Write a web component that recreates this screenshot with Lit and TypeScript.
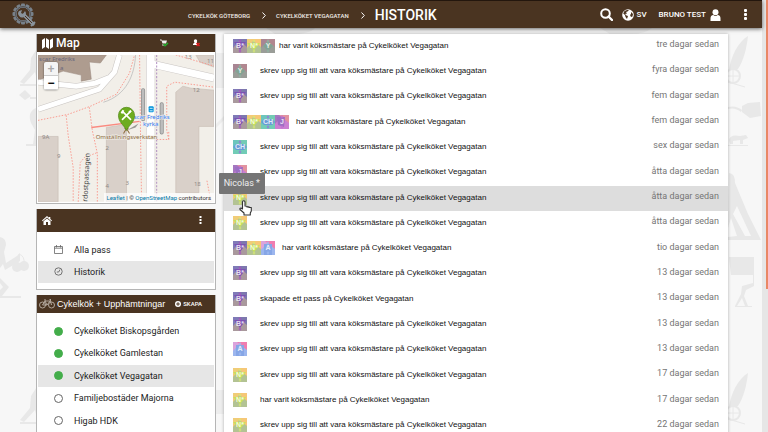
import { LitElement, html, svg, css } from "lit";
import { customElement, property } from "lit/decorators.js";
import { classMap } from "lit/directives/class-map.js";

type Palette = { base: string; left: string; right: string; core: string; spark: string; shape: string };

const palettes: Record<string, Palette> = {
  "B*": { base: "#a9999d", left: "#807ab8", right: "#7d78ae", core: "#7c52b3", spark: "#a64fc4", shape: "1,3 13,3 7,11" },
  "N*": { base: "#b3c393", left: "#f0cd78", right: "#f6c777", core: "#c6e25a", spark: "#d8ec72", shape: "0,4 13,4 7,11" },
  Y: { base: "#9a9d98", left: "#a88593", right: "#b18790", core: "#82a394", spark: "#93b5a4", shape: "7,2 12,7 7,12 2,7" },
  CH: { base: "#72ccb6", left: "#6cc5bd", right: "#74cbb4", core: "#679bd6", spark: "#9a6fe0", shape: "0,7 3,4 11,4 14,7 11,10 3,10" },
  J: { base: "#cb80d2", left: "#a577c0", right: "#e293a0", core: "#9c6fc4", spark: "#c46fd0", shape: "2,2 10,2 9,12 3,10" },
  A: { base: "#9cb6ee", left: "#dba3dc", right: "#f07db0", core: "#86a6e6", spark: "#a3bdf2", shape: "3,3 11,3 11,14 3,14" },
};

@customElement("user-avatar")
class UserAvatar extends LitElement {
  @property() initials = "";
  static styles = css`
    :host { display: block; width: 14px; height: 14px; }
    svg { display: block; }
    text { font: 700 7px "Liberation Sans", sans-serif; fill: #fff; opacity: 0.8; }
  `;
  render() {
    const p = palettes[this.initials];
    return html`<svg width="14" height="14" viewBox="0 0 14 14">
      <rect width="14" height="14" fill=${p.base}></rect>
      <path d="M0 0H8L0 9Z" fill=${p.left}></path>
      <path d="M4 0H14V8Z" fill=${p.right}></path>
      <polygon points=${p.shape} fill=${p.core}></polygon>
      <path d="M7 0L8.500 2L7 4L5.500 2ZM7 10L8.500 12L7 14L5.500 12Z" fill=${p.spark} opacity=".7"></path>
      <text x="7" y="9" text-anchor="middle">${this.initials}</text>
    </svg>`;
  }
}

@customElement("area-map")
class AreaMap extends LitElement {
  static styles = css`
    :host { display: grid; overflow: hidden; }
    .tiles, .controls, .credit { grid-area: 1 / 1; }
    .tiles { display: block; width: 100%; height: auto; }
    .num { font: 6px "Noto Sans", sans-serif; fill: #8f8986; }
    .label { font: 6px "Noto Sans", sans-serif; paint-order: stroke; stroke: #f2efe9; stroke-width: 1px; }
    .blue { fill: #2f7bf5; }
    .tan { fill: #8c6b3c; }
    .dark { font-size: 7px; fill: #444; }
    .navy { fill: #66667c; stroke: none; }
    .controls {
      align-self: start; justify-self: start; z-index: 1; margin: 7px 6px; display: grid;
      border-radius: 2px; overflow: hidden; box-shadow: 0 0 2px rgba(0, 0, 0, 0.6);
    }
    button {
      width: 14px; height: 14px; border: 0; padding: 0; background: #fff; color: #000;
      font: 700 12px/12px "Liberation Sans", sans-serif; border-bottom: 1px solid #ccc;
    }
    button:disabled { background: #f4f4f4; color: #aaa; }
    .credit {
      align-self: end; justify-self: end; z-index: 1; padding: 0 3px 0 2px; white-space: nowrap;
      background: rgba(255, 255, 255, 0.7); color: #333; font: 6px/9px Roboto, sans-serif;
    }
    a { color: #0078a8; text-decoration: none; }
  `;
  render() {
    return html`
      <svg class="tiles" viewBox="0 0 175 146">
        <rect width="175" height="146" fill="#f2efe9"></rect>
        <path d="M0 0H68L62 8L51 7L53 24L43 26V20L25 16L0 25Z" fill="#ae9c8f" stroke="#96857a" stroke-width=".5"></path>
        <path d="M137 37L144 31L152 33L175 35V71H160V137H137ZM0 81H20V146H0ZM68 72L88 69V146H68ZM157 0H175V12L161 7Z" fill="#d9d0c9" stroke="#c6bab3" stroke-width=".6"></path>
        <g fill="none" stroke="#c9c5c2" stroke-width="6">
          <path d="M0 54L61 34L76 17L81 0M0 27L38 31L57 28L72 22"></path>
          <path d="M114 9L175 23" stroke-width="8"></path>
          <path d="M112 0V146" stroke-width="9"></path>
        </g>
        <g fill="none" stroke="#fff" stroke-width="5">
          <path d="M0 54L61 34L76 17L81 0M0 27L38 31L57 28L72 22"></path>
          <path d="M113 9L175 23" stroke-width="7"></path>
          <path d="M112 0V146" stroke-width="8"></path>
        </g>
        <path d="M97 0C96 20 88 40 65 47" fill="none" stroke="#bbb" stroke-width=".8"></path>
        <g fill="none" stroke="#fa9488" stroke-width=".9" stroke-dasharray="1.500 1.500">
          <path d="M0 65L30 59L52 51L78 39L91 18L96 0M28 60L30 80L35 112V146M51 52L54 75L59 98V146M40 146L42 107L46 102L59 97M101 0L102 84L103 146M118 84H130L128 75V31L136 27L175 32M137 0L175 11M130 84V75M168 125L172 146"></path>
        </g>
        <path d="M53 72L101 66" stroke="#fa8a80" stroke-width="1.500"></path>
        <path d="M118 0V146" stroke="#b190c0" stroke-width="1" stroke-dasharray="2 1.500"></path>
        <path d="M104.500 35V64M123 49V77" stroke="#8e8e8e" stroke-width="4" stroke-linecap="round"></path>
        <path d="M104.500 35V64M123 49V77" stroke="#bdbdbd" stroke-width="2.500" stroke-linecap="round"></path>
        <rect x="110" y="51" width="5" height="6" rx="1" fill="#0092da"></rect>
        <path d="M111 53H114M111 55.500H114" stroke="#fff" stroke-width=".8"></path>
        <text class="label navy" x="1" y="6">scar Fredriks</text>
        <text class="label navy" x="22" y="15">a</text>
        <text class="label blue" x="113" y="64" text-anchor="middle">scar Fredriks</text>
        <text class="label blue" x="112" y="71" text-anchor="middle">kyrka</text>
        <text class="label tan" x="88" y="84" text-anchor="middle">Omställningsverkstan</text>
        <text class="label dark" transform="translate(49 146) rotate(-87)">rdostpassagen</text>
        <text class="num" x="4" y="84">9A</text><text class="num" x="19" y="102">9</text>
        <text class="num" x="67" y="94">2</text><text class="num" x="67" y="132">4</text>
        <text class="num" x="87" y="129">3</text><text class="num" x="155" y="130">18</text>
        <text class="num" x="154" y="37">12</text><text class="num" x="146" y="4">13</text>
        <text class="num" x="168" y="8">11</text>
        <path d="M88 75L100 68L97 72Z" fill="#444" opacity=".5"></path>
        <path d="M85 78L88 73L91 78M86 73H90" stroke="#8c6b3c" fill="none"></path>
        <path d="M88 75C85 69 80 67 80 60A8 8 0 0 1 96 60C96 67 91 69 88 75Z" fill="#6dac20" stroke="#4f8613" stroke-width=".7"></path>
        <path d="M84 56L92 64M92 56L84 64" stroke="#fff" stroke-width="1.600" stroke-linecap="round"></path>
        <path d="M83 58L85 55M90.500 57L92.500 55.500" stroke="#fff" stroke-width="2"></path>
      </svg>
      <div class="controls">
        <button disabled aria-label="Zooma in">+</button>
        <button aria-label="Zooma ut">−</button>
      </div>
      <div class="credit"><a href="#leaflet">Leaflet</a> | © <a href="#osm">OpenStreetMap</a> contributors</div>`;
  }
}

const full = "skrev upp sig till att vara köksmästare på Cykelköket Vegagatan";
const was = "har varit köksmästare på Cykelköket Vegagatan";
type Entry = { who: string[]; text: string; when: string; gap?: string; tip?: string };
const entries: Entry[] = [
  { who: ["B*", "N*", "Y"], text: was, when: "tre dagar sedan", gap: "tight" },
  { who: ["Y"], text: full, when: "fyra dagar sedan" },
  { who: ["B*"], text: full, when: "fem dagar sedan" },
  { who: ["B*", "N*", "CH", "J"], text: was, when: "fem dagar sedan", gap: "medium" },
  { who: ["CH"], text: full, when: "sex dagar sedan" },
  { who: ["J"], text: full, when: "åtta dagar sedan" },
  { who: ["N*"], text: full, when: "åtta dagar sedan", tip: "Nicolas *" },
  { who: ["N*"], text: full, when: "åtta dagar sedan" },
  { who: ["B*", "N*", "A"], text: was, when: "tio dagar sedan", gap: "medium" },
  { who: ["B*"], text: full, when: "13 dagar sedan" },
  { who: ["B*"], text: "skapade ett pass på Cykelköket Vegagatan", when: "13 dagar sedan" },
  { who: ["B*"], text: full, when: "13 dagar sedan" },
  { who: ["A"], text: full, when: "13 dagar sedan" },
  { who: ["N*"], text: full, when: "17 dagar sedan" },
  { who: ["N*"], text: was, when: "17 dagar sedan" },
  { who: ["N*"], text: full, when: "22 dagar sedan" },
];

const places = [
  { name: "Cykelköket Biskopsgården", member: true },
  { name: "Cykelköket Gamlestan", member: true },
  { name: "Cykelköket Vegagatan", member: true, current: true },
  { name: "Familjebostäder Majorna", member: false },
  { name: "Higab HDK", member: false },
];

const teeth = [0, 30, 60, 90, 120, 150, 180, 210, 240, 270, 300, 330];

const walker = svg`<path d="M38 19L31 30L30 42L20 54L24 56L35 44L38 56H42V18Z M20 56H42V58H20Z"/>`;
const winged = svg`<path d="M748 8C738 14 731 28 729 42L738 41C744 32 747 18 748 8Z"/>
  <circle cx="733" cy="48" r="7" fill="none" stroke="#e8e8e8" stroke-width="2"/>
  <path d="M726 48H740M733 41V55M728 54L745 59" fill="none" stroke="#e8e8e8"/>`;

@customElement("app-root")
class AppRoot extends LitElement {
  static styles = css`
    :host {
      display: grid; grid-template-columns: minmax(0, 1fr) 6px; grid-template-rows: 28px minmax(0, 1fr);
      height: 100vh; overflow: hidden; position: relative; isolation: isolate;
      background: #f7f7f7; color: #222; font-family: Roboto, sans-serif;
    }
    svg { display: block; flex: none; }
    a { color: inherit; text-decoration: none; }
    button { border: 0; padding: 0; background: none; color: inherit; font: inherit; display: flex; align-items: center; }
    .art { position: absolute; inset: 28px 6px 0 0; z-index: -1; overflow: hidden; }
    .art svg { width: 100%; }

    header {
      display: grid; grid-template-columns: 188px minmax(0, 1fr) auto; align-items: center;
      background: #4a3421; border-top: 1px solid #23160d; box-sizing: border-box;
      color: #fff; box-shadow: 0 1px 4px rgba(0, 0, 0, 0.6); z-index: 1;
    }
    .logo { margin-left: 12px; justify-self: start; }
    .crumbs { display: flex; align-items: center; font-size: 6px; line-height: 10px; font-weight: 500; color: #f0ece8; white-space: nowrap; }
    .crumbs a { padding-top: 2px; }
    .crumbs svg { margin: 2px 10px 0 12px; }
    h1 { margin: 0; font-size: 14px; line-height: 20px; font-weight: 500; color: #fff; }
    .tools { display: flex; align-items: center; font-size: 8px; font-weight: 500; padding-right: 14px; }
    .tools button { gap: 3px; }
    .search { margin-right: 9px; }
    .lang { margin-right: 12px; }
    .user { margin-right: 22px; }

    .page {
      display: grid; grid-template-columns: 180px minmax(0, 1fr); column-gap: 8px; align-items: stretch;
      padding: 6px 34px 0 36px; overflow: hidden;
    }
    aside { display: flex; flex-direction: column; gap: 5px; }
    .card { border: 1px solid #b5b5b5; border-top: 0; background: #fff; }
    .bar { display: flex; align-items: center; height: 18px; padding: 0 5px; background: #4a3421; color: #fff; }
    .bar h2 { margin: 0; font-size: 12px; line-height: 16px; font-weight: 500; }
    .bar.tall { height: 23px; padding-right: 13px; justify-content: space-between; }
    .map h2 { flex: 1; margin-left: 3px; }
    .map .bar svg + svg { margin-left: 23px; }
    .map .bar { padding-right: 14px; }
    area-map { margin: 3px 1px 1px; }
    .places { flex: 1; display: flex; flex-direction: column; }
    .places .bar { padding: 0 13px 0 2px; }
    .places h2 { flex: 1; margin-left: 2px; font: 400 9px/16px "Liberation Sans", sans-serif; }
    .places .bar button { gap: 2px; font-size: 6px; font-weight: 500; }
    ul { list-style: none; margin: 0; padding: 7px 1px 6px; display: grid; grid-auto-rows: minmax(22px, 1fr); flex: 1; }
    li a { display: flex; align-items: center; height: 100%; padding-left: 16px; gap: 11px; font-size: 9px; }
    .current { background: #e6e6e6; }
    .dot { box-sizing: border-box; width: 9px; height: 9px; border-radius: 50%; border: 1px solid #666; }
    .dot.on { background: #43ad4a; border-color: #43ad4a; }

    .feed {
      list-style: none; margin: 0; padding: 0; background: #fff; min-height: calc(100vh - 27px);
      display: grid; grid-auto-rows: 1fr; box-shadow: 0 0 3px rgba(0, 0, 0, 0.3);
    }
    .row { display: flex; align-items: center; padding: 0 9px 2px; }
    .row.hover { background: #ddd; }
    .who { display: flex; position: relative; margin-right: 13px; }
    .who.tight { margin-right: 4px; }
    .who.medium { margin-right: 7px; }
    .what { flex: 1; font: 8px/16px "Liberation Sans", sans-serif; color: #111; white-space: nowrap; }
    time { font-size: 9px; line-height: 16px; padding-bottom: 3px; color: #757575; }
    .tip {
      position: absolute; right: -18px; bottom: 11px; padding: 0 5px; border-radius: 1px; white-space: nowrap;
      background: #757575; color: #eee; font-size: 9px; line-height: 21px;
    }
    .hand { position: absolute; left: 6px; top: 9px; z-index: 2; }
    .scroll { grid-area: 1 / 2 / 3 / 3; background: #e6e6e6; display: grid; justify-items: end; grid-template-rows: 67% 1fr; }
    .scroll i { width: 2px; background: #e98765; }
  `;

  header() {
    return html`<header>
      <a class="logo" href="#home" aria-label="Start"><svg width="24" height="24" viewBox="0 0 24 24">
        <g fill="#78818a">${teeth.map((t) => svg`<rect x="9" y="0.500" width="4" height="4" rx="1" transform=${`rotate(${t} 11 11)`}/>`)}</g>
        <circle cx="11" cy="11" r="7.500" fill="none" stroke="#78818a" stroke-width="2"></circle>
        <circle cx="11" cy="11" r="7.500" fill="none" stroke="#3b3430" stroke-width=".6"></circle>
        <path d="M12 12L21 21" stroke="#89929b" stroke-width="3.500" stroke-linecap="round"></path>
        <path d="M7 8A4 4 0 0 0 12 14A4 4 0 0 0 13 8L11 11L9 10L10 7Z" fill="#89929b"></path>
        <path d="M13 13L20 20" stroke="#4a3421" stroke-width="1"></path>
        <path d="M19 23L23 19" stroke="#89929b" stroke-width="2"></path>
      </svg></a>
      <nav class="crumbs">
        <a href="#city">CYKELKÖK GÖTEBORG</a>${this.chevron()}
        <a href="#place">CYKELKÖKET VEGAGATAN</a>${this.chevron()}
        <h1>HISTORIK</h1>
      </nav>
      <div class="tools">
        <button class="search" aria-label="Sök"><svg width="13" height="13" viewBox="0 0 13 13" fill="none" stroke="#fff" stroke-width="2">
          <circle cx="5.500" cy="5.500" r="4.300"></circle><path d="M8.500 8.500L12 12" stroke-width="2.400" stroke-linecap="round"></path></svg></button>
        <button class="lang"><svg width="12" height="12" viewBox="0 0 12 12"><circle cx="6" cy="6" r="5.800" fill="#fff"></circle>
          <path d="M7 1L5.500 2.500L4 3L5 4.500L3 5L4.500 6.500L6 7L5 10L3.500 8L3 6L1.200 4.500L2.500 2L5 1ZM9 3L11 5L10.500 7.500L9 8L8 6L9 5Z" fill="#4a3421"></path></svg>SV</button>
        <button class="user">BRUNO TEST<svg width="12" height="12" viewBox="0 0 12 12" fill="#fff">
          <circle cx="6.500" cy="3.200" r="3"></circle><path d="M1.500 12V9.500Q1.500 6 4.300 6Q6.500 8 8.700 6Q11.500 6 11.500 9.500V12Z"></path></svg></button>
        <button aria-label="Mer"><svg width="5" height="11" viewBox="0 0 5 11" fill="#fff">
          <rect x="1" width="3" height="3" rx="1"></rect><rect x="1" y="4" width="3" height="3" rx="1"></rect><rect x="1" y="8" width="3" height="3" rx="1"></rect></svg></button>
      </div>
    </header>`;
  }

  chevron() {
    return html`<svg width="4" height="7" viewBox="0 0 4 7" fill="none" stroke="#fff"><path d="M.5 .5L3.300 3.500L.5 6.500"></path></svg>`;
  }

  sidebar() {
    return html`<aside>
      <section class="card map">
        <div class="bar">
          <svg width="11" height="11" viewBox="0 0 11 11" fill="#fff"><path d="M0 2L3 0V9L0 11ZM4 0L7 2V11L4 9ZM8 2L11 0V9L8 11Z"></path></svg>
          <h2>Map</h2>
          <svg width="9" height="8" viewBox="0 0 9 8"><path d="M0 .5H1.500L2 1.500H7L6 4.500H2.500L1.500 1.500H0Z" fill="#eee"></path><circle cx="3" cy="6" r=".8" fill="#eee"></circle><path d="M3.500 5L5 6.700L8 4" fill="none" stroke="#22b02c" stroke-width="1.500"></path></svg>
          <svg width="9" height="8" viewBox="0 0 9 8"><circle cx="3.500" cy="2" r="1.700" fill="#fff"></circle><path d="M1 6V5L3 3H5V6Z" fill="#fff"></path><path d="M4.500 4L7.500 7M7.500 4L4.500 7" stroke="#d91e1e" stroke-width="1.500"></path></svg>
        </div>
        <area-map></area-map>
      </section>
      <section class="card">
        <div class="bar tall">
          <a href="#home" aria-label="Hem"><svg width="10" height="9" viewBox="0 0 10 9" fill="#fff"><path d="M5 0L7 1.800V1H8.300V3L10 4.500L9.400 5.200L5 1.500L.6 5.200L0 4.500ZM5 2.400L8.500 5.300V9H6V6H4V9H1.500V5.300Z"></path></svg></a>
          <button aria-label="Mer"><svg width="3" height="8" viewBox="0 0 3 8" fill="#fff"><path d="M.5 0H2.500V2H.5ZM.5 3H2.500V5H.5ZM.5 6H2.500V8H.5Z"></path></svg></button>
        </div>
        <ul>
          <li><a href="#pass"><svg width="9" height="9" viewBox="0 0 9 9" fill="none" stroke="#666" stroke-width=".8"><path d="M.5 1.500H8.500V8.500H.5ZM.5 3.200H8.500M2.500 0V2.500M6.500 0V2.500"></path></svg>Alla pass</a></li>
          <li class="current"><a href="#historik"><svg width="9" height="9" viewBox="0 0 9 9" fill="none" stroke="#666" stroke-width=".9"><circle cx="4.500" cy="4.500" r="3.700"></circle><path d="M6 2.500L4.700 5H2.800"></path></svg>Historik</a></li>
        </ul>
      </section>
      <section class="card places">
        <div class="bar">
          <svg width="16" height="10" viewBox="0 0 16 10" fill="none" stroke="#bdb3a9" stroke-width=".9"><circle cx="3.500" cy="6" r="3"></circle><circle cx="12.500" cy="6" r="3"></circle><path d="M3.500 6L6 2H11L8 6H3.500M5 1H7M6 2L8 6M10 0H11.500V2L12.500 6"></path></svg>
          <h2>Cykelkök + Upphämtningar</h2>
          <button><svg width="6" height="6" viewBox="0 0 6 6"><circle cx="3" cy="3" r="3" fill="#fff"></circle><path d="M3 1.200V4.800M1.200 3H4.800" stroke="#4a3421"></path></svg>SKAPA</button>
        </div>
        <ul>${places.map((p) => html`<li class=${classMap({ current: !!p.current })}>
          <a href="#plats"><span class=${classMap({ dot: true, on: p.member })}></span>${p.name}</a></li>`)}</ul>
      </section>
    </aside>`;
  }

  entry(e: Entry) {
    return html`<li class=${classMap({ row: true, hover: !!e.tip })}>
      <div class=${`who ${e.gap ?? ""}`}>
        ${e.who.map((w) => html`<user-avatar .initials=${w}></user-avatar>`)}
        ${e.tip ? html`<span class="tip" role="tooltip">${e.tip}</span>
          <svg class="hand" width="14" height="16" viewBox="0 0 14 16" fill="#fff" stroke="#333" stroke-width="1.100" stroke-linejoin="round">
            <path d="M3.500 9V2Q3.500 .7 4.700 .7Q6 .7 6 2V6L8 6.200V7L10 6.700V7.500L12.300 7.500V11L11.300 13V15H5V13L1 9.500Q.5 8 2 8Z"></path></svg>` : ""}
      </div>
      <span class="what">${e.text}</span>
      <time>${e.when}</time>
    </li>`;
  }

  render() {
    return html`
      <div class="art"><svg viewBox="0 0 762 404" preserveAspectRatio="xMinYMin slice" fill="#e8e8e8">
        ${walker}<g transform="translate(0 338)">${walker}</g>
        <path d="M19 67L25 62L31 68L25 72ZM30 69H36V71H30ZM36 80Q27 84 31 95L35 102L33 116H26V118H40V80Z"></path>
        <path d="M0 209Q6 210 6 217L4 224L6 235L17 228L20 225V233L5 242L3 236L0 240V250L9 259L2 268H21V270H0V262L3 259L0 255Z"></path>
        <circle cx="17" cy="239" r="5"></circle><circle cx="24" cy="238" r="5"></circle>
        <path d="M19 226L17 236M19 226Q25 228 24 236" fill="none" stroke="#e8e8e8"></path>
        <path d="M266 0H315Q310 6 290 6H275ZM600 0H652Q645 6 630 6H610ZM216 25H224V60H216ZM216 96L224 88V92L216 100ZM216 362H224V386H216Z" opacity=".7"></path>
        ${winged}
        <path d="M742 78L748 75L760 74L761 88L750 90L742 84ZM728 79Q736 77 742 82L741 84Q735 79 728 81Z"></path>
        <path d="M729 112Q730 106 740 108L746 107L748 110L743 112V116H740V112L733 113V116H730ZM728 117H748V118H728Z"></path>
        <path d="M729 145Q735 145 735 155L748 186L761 212H728V209L737 208L731 190L728 200ZM733 186L745 208H751L737 178Z"></path>
        <path d="M729 229L754 229L753 247H731ZM753 230H754V258L746 262L744 268L748 278H745L742 270L737 278H735L741 266L742 258L753 255ZM735 278H752V279H735Z"></path>
        <g transform="translate(0 337)">${winged}</g>
      </svg></div>
      ${this.header()}
      <div class="page">
        ${this.sidebar()}
        <ol class="feed">${entries.map((e) => this.entry(e))}</ol>
      </div>
      <div class="scroll"><i></i></div>`;
  }
}
